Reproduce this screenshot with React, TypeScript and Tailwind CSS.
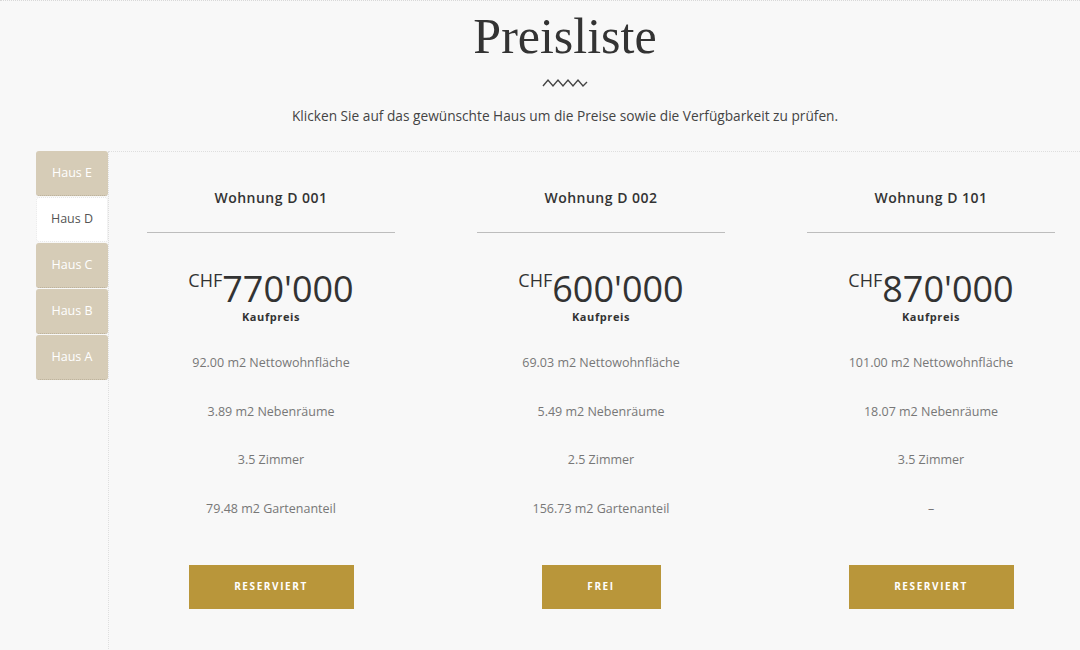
import React, { useState } from 'react';

const houses = ['Haus E', 'Haus D', 'Haus C', 'Haus B', 'Haus A'];

const units = [
  {
    name: 'Wohnung D 001',
    price: "770'000",
    features: ['92.00 m2 Nettowohnfläche', '3.89 m2 Nebenräume', '3.5 Zimmer', '79.48 m2 Gartenanteil'],
    status: 'RESERVIERT'
  },
  {
    name: 'Wohnung D 002',
    price: "600'000",
    features: ['69.03 m2 Nettowohnfläche', '5.49 m2 Nebenräume', '2.5 Zimmer', '156.73 m2 Gartenanteil'],
    status: 'FREI'
  },
  {
    name: 'Wohnung D 101',
    price: "870'000",
    features: ['101.00 m2 Nettowohnfläche', '18.07 m2 Nebenräume', '3.5 Zimmer', '–'],
    status: 'RESERVIERT'
  }
];

const App: React.FC = () => {
  const [active, setActive] = useState('Haus D');

  return (
    <div className="w-[1080px] h-[650px] overflow-hidden bg-[#f8f8f8] border-t border-dotted border-[#d8d8d8] font-['Open_Sans',sans-serif] text-[#333]">
      {/* Header */}
      <div className="pl-[50px] flex flex-col items-center">
        <h1 className="mt-[7px] font-['Liberation_Serif',serif] text-[50px] leading-[56px] text-[#333]">
          Preisliste
        </h1>
        <svg width="46" height="12" viewBox="0 0 46 12" className="mt-[12px]">
          <polyline
            points="1,10 6,4 11,10 16,4 21,10 26,4 31,10 36,4 41,10 45,6"
            fill="none"
            stroke="#444"
            strokeWidth="1.4"
          />
        </svg>
        <p className="mt-[18px] text-[13.7px] leading-[20px] text-[#444]">
          Klicken Sie auf das gewünschte Haus um die Preise sowie die Verfügbarkeit zu prüfen.
        </p>
      </div>

      {/* Body */}
      <div className="flex mt-[25px]">
        {/* Tabs */}
        <div className="w-[108px] pl-[36px] flex flex-col gap-[1px] shrink-0">
          {houses.map((h) => (
            <button
              key={h}
              onClick={() => setActive(h)}
              className={
                h === active
                  ? 'w-[72px] h-[45px] rounded-[3px] bg-white border border-dotted border-[#e6e6e6] text-[12.5px] text-[#555]'
                  : 'w-[72px] h-[45px] rounded-[3px] bg-[#d6ccb7] border-b border-dotted border-[#b9ae98] text-[12.5px] text-white'
              }
            >
              {h}
            </button>
          ))}
        </div>

        {/* Panel */}
        <div className="flex-1 h-[500px] border-l border-t border-dotted border-[#dedede]">
          <div className="-ml-[3px] grid grid-cols-[330px_330px_330px]">
            {units.map((u) => (
              <div key={u.name} className="flex flex-col items-center">
                <h3 className="mt-[35px] text-[14px] leading-[22px] font-semibold tracking-[0.5px] text-[#333]">
                  {u.name}
                </h3>
                <div className="mt-[23px] w-[248px] h-px bg-[#bdbdbd]" />
                <div className="mt-[38px] h-[36px] flex items-start">
                  <span className="text-[18px] leading-[18px] text-[#333]">CHF</span>
                  <span className="text-[36px] leading-[36px] font-medium text-[#333]">{u.price}</span>
                </div>
                <span className="mt-[3px] text-[11px] leading-[14px] font-bold tracking-[0.6px] text-[#333]">
                  Kaufpreis
                </span>
                <div className="mt-[30px] flex flex-col items-center gap-[30.5px]">
                  {u.features.map((f, i) => (
                    <span key={i} className="h-[18px] text-[12.5px] leading-[18px] text-[#777]">
                      {f}
                    </span>
                  ))}
                </div>
                <button
                  className={
                    (u.status === 'FREI' ? 'w-[119px]' : 'w-[165px]') +
                    ' mt-[47px] h-[44px] bg-[#b9963a] text-white text-[10px] font-bold tracking-[1.6px]'
                  }
                >
                  {u.status}
                </button>
              </div>
            ))}
          </div>
        </div>
      </div>
    </div>
  );
};

export default App;
